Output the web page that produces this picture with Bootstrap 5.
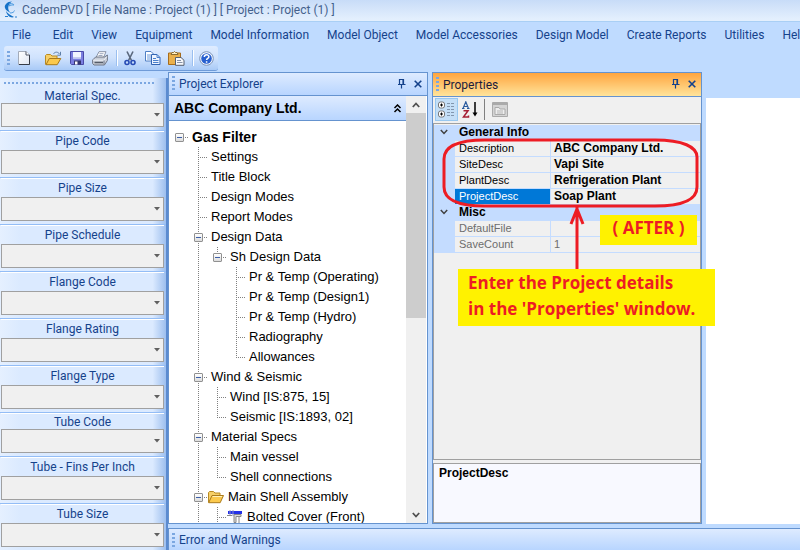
<!DOCTYPE html>
<html lang="en">
<head>
<meta charset="utf-8">
<meta name="viewport" content="width=device-width, initial-scale=1">
<title>CademPVD</title>
<link href="https://cdn.jsdelivr.net/npm/bootstrap@5.3.0/dist/css/bootstrap.min.css" rel="stylesheet">
<style>
:root{--line:#6593cf;--navy:#15428b;--face:#bfdbff;--ui:Roboto,"Open Sans",sans-serif;--arial:"Liberation Sans",Arial,sans-serif}
body{background:var(--face);font-family:var(--ui);font-size:12px;line-height:16px;color:var(--navy)}
button{padding:0;border:0;background:none;color:inherit}
svg{display:block;flex:none}
.titlebar{height:22px;padding-left:3px;gap:4px;background:linear-gradient(#c8dcf8,#e3effd 90%);border-bottom:1px solid #a9cff5;color:#44618c;white-space:pre}
.menubar{height:24px;padding:2px 0 0 3px;white-space:nowrap;overflow:hidden}
.menubar a{padding:0 9px;color:var(--navy);text-decoration:none}
.toolstrip{height:25px;width:214px;margin:0 0 1px 4px;padding:1px 0 0 3px;border-radius:3px;background:linear-gradient(#dfecff,#cfe2fd 50%,#a9caf7);border-bottom:1px solid #6f9bd8}
.toolstrip button{width:24px;height:23px;display:flex;align-items:center;justify-content:center}
.tool-sep{width:1px;height:16px;background:#fff;border-left:1px solid #9abff0;box-sizing:content-box}
.grip{width:3px;height:15px;flex:none;background:repeating-linear-gradient(#7ba7e1 0 2px,transparent 2px 4px)}
.sidebar{width:168px;flex:none;margin-top:6px;border-right:2px solid #5b8bd0;background:linear-gradient(90deg,#e5f0ff,#dbeaff 12%,#dbeaff 92%,#9dbfee)}
.dots{height:2px;margin:4px 10px 4px 4px;background:repeating-linear-gradient(90deg,#7ba7e1 0 2px,transparent 2px 4px)}
.spec{padding:0 2px 3px 1px}
.spec+.spec{border-top:1px solid #93bdf6}
.spec+.spec label{border-top:1px solid #fff}
.spec label{display:block;height:19px;line-height:18px;text-align:center}
.spec.tight label{height:16px;line-height:16px}
.spec:first-of-type label{height:15px;line-height:16px}
.spec select{display:block;width:100%;height:24px;border:1px solid #a0a0a0;background:#f0f0f0;appearance:none;border-radius:0}
.pick{display:grid}
.pick>*{grid-area:1/1}
.pick svg{place-self:center end;margin-right:4px;pointer-events:none}
.explorer{width:260px;flex:none;border:1px solid var(--line);background:#fff}
.caption{height:24px;padding:0 5px 0 3px;gap:4px;border-bottom:1px solid var(--line);background:linear-gradient(#deebff,#b8d5ff)}
.caption h2{font-size:12px;line-height:16px;margin:1px 0 0;font-weight:400;flex:1}
.company{height:25px;padding:0 4px 0 5px;border-bottom:1px solid var(--line);background:linear-gradient(#deebff,#b8d5ff);color:#000;font:bold 14px/20px var(--arial)}
.tree{list-style:none;margin:0;padding:6px 0 0 1px;font:13px/20px var(--arial);color:#000;white-space:nowrap}
.tree li{display:flex;height:20px;align-items:center}
.tree .root{font-weight:bold;font-size:14px}
.tree li>:last-child{padding-left:3px}
.guide{width:19px;height:20px;flex:none;background-repeat:no-repeat;--v:repeating-linear-gradient(#808080 0 1px,transparent 1px 2px);--h:repeating-linear-gradient(90deg,#808080 0 1px,transparent 1px 2px)}
.bar-v{background-image:var(--v);background-size:1px 20px;background-position:9px 0}
.tee{background-image:var(--v),var(--h);background-size:1px 20px,10px 1px;background-position:9px 0,9px 10px}
.elbow{background-image:var(--v),var(--h);background-size:1px 10px,10px 1px;background-position:9px 0,9px 10px}
.stub{background-image:var(--h);background-size:10px 1px;background-position:9px 10px}
.twist{display:block;width:9px;height:9px;margin:6px 0 0 5px;border:1px solid #919191;border-radius:1px;background:linear-gradient(#3d5fa8,#3d5fa8) center/5px 1px no-repeat,linear-gradient(#fff,#dcdcdc)}
.guide{display:flex;align-items:flex-start}
.scroller{width:20px;flex:none;background:#f0f0f0;margin-right:1px}
.scroller button{height:17px;width:20px;display:flex;align-items:center;justify-content:center}
.thumb{height:205px;background:#cdcdcd}
.props{width:270px;flex:none;border:1px solid var(--line);background:#f0f0f0}
.props .caption{background:linear-gradient(#ffa53f,#ffe49b);color:#1c1c3c}
.props .caption svg{color:var(--navy)}
.prop-tools{height:26px;padding:0 2px}
.prop-tools button{width:23px;height:23px;display:flex;align-items:center;justify-content:center}
.prop-tools .chosen{background:#c4dff7;border:1px solid #98c8f0}
.prop-tools .rule{width:1px;height:21px;background:#808080;margin:0 3px}
.grid-box{border:1px solid #a0a0a0;padding-top:1px}
.prop-grid{width:100%;border-collapse:separate;border-spacing:0;table-layout:fixed;font:11px/15px var(--arial);color:#000}
.prop-grid td,.prop-grid th{height:16px;padding:0 0 0 4px;border-bottom:1px solid #c4dcff;font-weight:400;white-space:nowrap}
.prop-grid .gutter,.prop-grid .cat{background:#c4dcff}
.prop-grid .gutter{padding-left:6px}
.prop-grid td:last-child{border-left:1px solid #c4dcff;padding-left:3px}
.prop-grid td b,.prop-grid .cat{font-weight:bold;font-size:12px}
.prop-grid .picked{background:#0078d7;color:#fff}
.prop-grid .off{color:#6d6d6d}
.hint{height:60px;margin-top:3px;border:1px solid #a0a0a0;background:#f8f9ff;padding:2px 5px;font:bold 12px/15px var(--arial);color:#000}
.callout,.after{background:#fff200;color:#ed1c24;font:bold 17px/26px "Open Sans",var(--ui);white-space:nowrap;z-index:2}
.ring{left:6px;top:62px;z-index:2;pointer-events:none}
.after{left:167px;top:142px;width:97px;height:30px;padding:0;line-height:26px;text-align:center}
.callout{left:25px;top:196px;width:257px;height:57px;padding:1px 0 0 10px}
.canvas-area{margin:26px 0 0 4px;background:#fff}
.errors{height:22px;margin-top:4px;padding:1px 3px 0;gap:4px;border-top:1px solid var(--line);border-left:1px solid var(--line);background:linear-gradient(#deebff,#b8d5ff)}
</style>
<script src="https://cdn.jsdelivr.net/npm/bootstrap@5.3.0/dist/js/bootstrap.bundle.min.js"></script>
</head>
<body class="vh-100 d-flex flex-column overflow-hidden">
<svg width="0" height="0" class="position-absolute" aria-hidden="true">
  <defs>
    <symbol id="arrow" viewBox="0 0 6 4"><path d="M0 0h6L3 3.5z" fill="#606060"/></symbol>
    <symbol id="pin" viewBox="0 0 8 10"><path d="M1.5 5.500V.5h4v5M5 .5v5M0 5.500h7.500M3.500 6v3.500" fill="none" stroke="currentColor" stroke-width="1.200"/></symbol>
    <symbol id="close" viewBox="0 0 8 8"><path d="M.7.7l6.600 6.600M7.300.7L.7 7.300" fill="none" stroke="currentColor" stroke-width="1.600"/></symbol>
    <symbol id="folder" viewBox="0 0 16 14"><path d="M.5 12.500V2.500l1-1h4l1.500 1.500h5v3" fill="#f6cf67" stroke="#b98a22"/><path d="M.7 12.700L4 5.500h11.500l-3.300 7.200z" fill="#fbc94d" stroke="#a97a1c"/><path d="M4.600 6.500h9.500" stroke="#fff0b8"/></symbol>
  </defs>
</svg>

<header class="titlebar d-flex align-items-center">
  <svg width="15" height="18" viewBox="0 0 15 18"><path d="M9 .5C4 .5 1 4 2 7c.6 2 3 3.500 5.500 5-1.500-2-3-4-2-7C6 3 7 2 9 .5z" fill="#1672c8"/><path d="M3 10c2 3 5 4 8 6-3 1.500-7-1-8-6z" fill="#1672c8"/><path d="M7 2.500c2 0 3.500.5 4 1.500-1.500-.2-3 0-4.500 1zM7 12c3 0 4-1 4.500-2.500" fill="none" stroke="#4c9be0"/><path d="M2 15.500h3M12 16h2" stroke="#2a7fd0"/></svg>
  <span>CademPVD [ File Name : Project (1) ] [ Project : Project (1) ]</span>
</header>

<nav class="menubar d-flex align-items-center" aria-label="Main menu">
  <a href="#">File</a><a href="#" class="ms-1">Edit</a><a href="#">View</a><a href="#">Equipment</a><a href="#">Model Information</a><a href="#">Model Object</a><a href="#">Model Accessories</a><a href="#">Design Model</a><a href="#">Create Reports</a><a href="#">Utilities</a><a href="#">Help</a>
</nav>

<div class="toolstrip d-flex align-items-center" role="toolbar" aria-label="Standard">
  <span class="grip"></span>
  <button type="button" aria-label="New" class="ms-1"><svg class="me-1" width="12" height="14" viewBox="0 0 12 14"><defs><linearGradient id="pg" x2="1" y2="1"><stop stop-color="#fff"/><stop offset="1" stop-color="#dfe6f2"/></linearGradient></defs><path d="M.5.5H8L11.500 4v9.500H.5z" fill="url(#pg)" stroke="#a3abb9"/><path d="M11.500 4v9.500H1" fill="none" stroke="#363c48"/><path d="M8 .5V4h3.500" fill="#fff" stroke="#4c5566"/></svg></button>
  <button type="button" aria-label="Open" class="ms-1"><svg width="17" height="15" viewBox="0 0 17 15"><path d="M.5 13.500V4.500l1-1h4L7 5h5v3" fill="#f6cf67" stroke="#b98a22"/><path d="M1 13.700l3.300-6.200h11.500l-3.600 6.200z" fill="#fbc94d" stroke="#a97a1c"/><path d="M8.500 2.800C10 .6 13 .6 14.500 3M15.500.8v3.400H12.200" fill="none" stroke="#5e7fa8"/></svg></button>
  <button type="button" aria-label="Save"><svg width="14" height="14" viewBox="0 0 14 14"><path d="M.5.5h13v13h-12l-1-1z" fill="#7b7fe0" stroke="#4a4aa8"/><path d="M3 1h8v6.500H3z" fill="#f2f5ff"/><path d="M3 6h8v1.500H3z" fill="#c7cdf0"/><path d="M4 9.500h7v4H4z" fill="#34366f"/><path d="M5 10.500h2.500v3H5z" fill="#fff"/></svg></button>
  <button type="button" aria-label="Print"><svg width="16" height="15" viewBox="0 0 16 15"><path d="M4 6.500L7 .7h7L11.500 6.500z" fill="#fff" stroke="#8892a5"/><path d="M7.500 2.700h4M6.500 4.500h4" stroke="#9aa6bd"/><path d="M.6 9l3-3h9l2.800-2v5.500l-3 4.500H2L.6 12.500z" fill="#c9ced8" stroke="#6f7786"/><path d="M1 9.200h10.800l3-3.500" fill="none" stroke="#eef1f6"/><path d="M2.500 11.500h8.500" stroke="#555c69" stroke-width="1.500"/><path d="M12 9.500v4" stroke="#71798a"/></svg></button>
  <span class="tool-sep ms-1"></span>
  <button type="button" aria-label="Cut"><svg width="12" height="15" viewBox="0 0 12 15"><path d="M3 .5l4.500 9M9 .5L4.500 9.500" stroke="#59667b" stroke-width="1.600"/><circle cx="3" cy="11.500" r="2" fill="none" stroke="#274bb4" stroke-width="1.600"/><circle cx="9" cy="11.500" r="2" fill="none" stroke="#274bb4" stroke-width="1.600"/></svg></button>
  <button type="button" aria-label="Copy"><svg width="16" height="14" viewBox="0 0 16 14"><path d="M.5.5H6l2.500 2.500v7h-8z" fill="#fff" stroke="#4f7fc4"/><path d="M2 4h4M2 6h4M2 8h4" stroke="#6d9bdb"/><path d="M6.500 3.500h5.500l3 3v7H6.500z" fill="#edf4ff" stroke="#3265b3"/><path d="M12 3.500v3h3M8 7.500h3M8 9.500h5.500M8 11.500h5.500" fill="none" stroke="#4a80cc"/></svg></button>
  <button type="button" aria-label="Paste"><svg width="17" height="15" viewBox="0 0 17 15"><path d="M.5 2h12v11.500H.5z" fill="#eab04c" stroke="#a76c1b"/><path d="M3 3.500l1-2h1.500L6.500.5l1 1H9l1 2z" fill="#fff0c6" stroke="#8a6b32"/><path d="M7.500 6.500h5.500l3 2.800v5H7.500z" fill="#f7f8fb" stroke="#576071"/><path d="M9 9.500h4M9 11.500h5.500" stroke="#8893a8"/></svg></button>
  <span class="tool-sep ms-1"></span>
  <button type="button" aria-label="Help"><svg width="15" height="15" viewBox="0 0 15 15"><circle cx="7.500" cy="7.500" r="6.800" fill="#f5f9ff" stroke="#7b93b8"/><circle cx="7.500" cy="7.500" r="5.300" fill="#2860cf"/><path d="M5.300 6c0-3 4.600-2.900 4.600-.3C9.900 7.400 7.600 7.200 7.600 9M7.600 10.200v1.500" fill="none" stroke="#fff" stroke-width="1.500"/></svg></button>
</div>

<div class="d-flex flex-grow-1 overflow-hidden">
  <aside class="sidebar">
    <div class="dots"></div>
    <form>
      <div class="spec"><label for="s1">Material Spec.</label><div class="pick"><select id="s1"></select><svg width="6" height="4"><use href="#arrow"/></svg></div></div>
      <div class="spec"><label for="s2">Pipe Code</label><div class="pick"><select id="s2"></select><svg width="6" height="4"><use href="#arrow"/></svg></div></div>
      <div class="spec"><label for="s3">Pipe Size</label><div class="pick"><select id="s3"></select><svg width="6" height="4"><use href="#arrow"/></svg></div></div>
      <div class="spec"><label for="s4">Pipe Schedule</label><div class="pick"><select id="s4"></select><svg width="6" height="4"><use href="#arrow"/></svg></div></div>
      <div class="spec"><label for="s5">Flange Code</label><div class="pick"><select id="s5"></select><svg width="6" height="4"><use href="#arrow"/></svg></div></div>
      <div class="spec"><label for="s6">Flange Rating</label><div class="pick"><select id="s6"></select><svg width="6" height="4"><use href="#arrow"/></svg></div></div>
      <div class="spec"><label for="s7">Flange Type</label><div class="pick"><select id="s7"></select><svg width="6" height="4"><use href="#arrow"/></svg></div></div>
      <div class="spec tight"><label for="s8">Tube Code</label><div class="pick"><select id="s8"></select><svg width="6" height="4"><use href="#arrow"/></svg></div></div>
      <div class="spec"><label for="s9">Tube - Fins Per Inch</label><div class="pick"><select id="s9"></select><svg width="6" height="4"><use href="#arrow"/></svg></div></div>
      <div class="spec"><label for="s10">Tube Size</label><div class="pick"><select id="s10"></select><svg width="6" height="4"><use href="#arrow"/></svg></div></div>
      <div class="spec"></div>
    </form>
  </aside>

  <div class="d-flex flex-column flex-grow-1 overflow-hidden">
    <main class="d-flex flex-grow-1 overflow-hidden">
      <section class="explorer d-flex flex-column">
        <div class="caption d-flex align-items-center">
          <span class="grip"></span><h2>Project Explorer</h2>
          <button type="button" aria-label="Pin explorer"><svg width="8" height="10"><use href="#pin"/></svg></button>
          <button type="button" class="ms-1" aria-label="Close explorer"><svg width="8" height="8"><use href="#close"/></svg></button>
        </div>
        <div class="d-flex flex-grow-1 overflow-hidden">
          <div class="flex-grow-1 overflow-hidden">
            <div class="company d-flex align-items-center justify-content-between"><span>ABC Company Ltd.</span>
              <button type="button" aria-label="Collapse"><svg width="9" height="9" viewBox="0 0 9 9"><path d="M1.500 4l3-3 3 3M1.500 8l3-3 3 3" fill="none" stroke="#000" stroke-width="1.500"/></svg></button></div>
            <ul class="tree">
              <li class="root"><span class="guide stub"><button type="button" class="twist" aria-label="Toggle Gas Filter"></button></span><span>Gas Filter</span></li>
              <li><span class="guide"></span><span class="guide tee"></span><span>Settings</span></li>
              <li><span class="guide"></span><span class="guide tee"></span><span>Title Block</span></li>
              <li><span class="guide"></span><span class="guide tee"></span><span>Design Modes</span></li>
              <li><span class="guide"></span><span class="guide tee"></span><span>Report Modes</span></li>
              <li><span class="guide"></span><span class="guide tee"><button type="button" class="twist" aria-label="Toggle Design Data"></button></span><span>Design Data</span></li>
              <li><span class="guide"></span><span class="guide bar-v"></span><span class="guide elbow"><button type="button" class="twist" aria-label="Toggle Sh Design Data"></button></span><span>Sh Design Data</span></li>
              <li><span class="guide"></span><span class="guide bar-v"></span><span class="guide"></span><span class="guide tee"></span><span>Pr &amp; Temp (Operating)</span></li>
              <li><span class="guide"></span><span class="guide bar-v"></span><span class="guide"></span><span class="guide tee"></span><span>Pr &amp; Temp (Design1)</span></li>
              <li><span class="guide"></span><span class="guide bar-v"></span><span class="guide"></span><span class="guide tee"></span><span>Pr &amp; Temp (Hydro)</span></li>
              <li><span class="guide"></span><span class="guide bar-v"></span><span class="guide"></span><span class="guide tee"></span><span>Radiography</span></li>
              <li><span class="guide"></span><span class="guide bar-v"></span><span class="guide"></span><span class="guide elbow"></span><span>Allowances</span></li>
              <li><span class="guide"></span><span class="guide tee"><button type="button" class="twist" aria-label="Toggle Wind and Seismic"></button></span><span>Wind &amp; Seismic</span></li>
              <li><span class="guide"></span><span class="guide bar-v"></span><span class="guide tee"></span><span>Wind [IS:875, 15]</span></li>
              <li><span class="guide"></span><span class="guide bar-v"></span><span class="guide elbow"></span><span>Seismic [IS:1893, 02]</span></li>
              <li><span class="guide"></span><span class="guide tee"><button type="button" class="twist" aria-label="Toggle Material Specs"></button></span><span>Material Specs</span></li>
              <li><span class="guide"></span><span class="guide bar-v"></span><span class="guide tee"></span><span>Main vessel</span></li>
              <li><span class="guide"></span><span class="guide bar-v"></span><span class="guide elbow"></span><span>Shell connections</span></li>
              <li><span class="guide"></span><span class="guide tee"><button type="button" class="twist" aria-label="Toggle Main Shell Assembly"></button></span><svg width="16" height="14"><use href="#folder"/></svg><span class="ps-1">Main Shell Assembly</span></li>
              <li><span class="guide"></span><span class="guide bar-v"></span><span class="guide tee"></span><svg width="16" height="14" viewBox="0 0 16 14"><path d="M1 1h14v3H1z" fill="#2431e8"/><path d="M3 0v6M6 0v6" stroke="#8890c8"/><path d="M0 5.500h5M7 4.500h7v2H9v6H7zM12 6.500v7" fill="#ddd" stroke="#888"/></svg><span class="ps-1">Bolted Cover (Front)</span></li>
            </ul>
          </div>
          <div class="scroller d-flex flex-column">
            <button type="button" aria-label="Scroll up"><svg width="8" height="6" viewBox="0 0 8 6"><path d="M.8 5L4 1.500 7.200 5" fill="none" stroke="#505050" stroke-width="1.800"/></svg></button>
            <div class="thumb"></div>
            <button type="button" class="mt-auto" aria-label="Scroll down"><svg width="8" height="6" viewBox="0 0 8 6"><path d="M.8 1L4 4.500 7.200 1" fill="none" stroke="#505050" stroke-width="1.800"/></svg></button>
          </div>
        </div>
      </section>

      <section class="props d-flex flex-column position-relative ms-1">
        <div class="caption d-flex align-items-center">
          <span class="grip"></span><h2>Properties</h2>
          <button type="button" aria-label="Pin properties"><svg width="8" height="10"><use href="#pin"/></svg></button>
          <button type="button" class="ms-1" aria-label="Close properties"><svg width="8" height="8"><use href="#close"/></svg></button>
        </div>
        <div class="prop-tools d-flex align-items-center">
          <button type="button" class="chosen" aria-label="Categorized"><svg width="17" height="17" viewBox="0 0 17 17"><rect x=".5" y="1" width="6" height="6" rx="2" fill="#fff" stroke="#777"/><rect x=".5" y="10" width="6" height="6" rx="2" fill="#fff" stroke="#777"/><path d="M2 4h3M3.500 2.500v3M2 13h3M3.500 11.500v3" stroke="#000"/><path d="M9 2.500h3M13 2.500h3M9 5.500h3M13 5.500h3M9 8.500h3M13 8.500h3M9 11.500h3M13 11.500h3M9 14.500h3M13 14.500h3" stroke="#8296ad"/></svg></button>
          <button type="button" aria-label="Alphabetical"><svg width="16" height="17" viewBox="0 0 16 17"><path d="M1 7.500L3.800.8 6.500 7.500M2 5.500h3.700M0 7.500h2.500M5 7.500h2.500" fill="none" stroke="#2c5c9e" stroke-width="1.200"/><path d="M1.500 9.800H6L1.500 16H6.500V14.500" fill="none" stroke="#a62035" stroke-width="1.500"/><path d="M13 1v12" stroke="#000" stroke-width="1.500"/><path d="M10.500 11.500h5L13 15.500z"/></svg></button>
          <span class="rule"></span>
          <button type="button" disabled aria-label="Property pages"><svg width="16" height="15" viewBox="0 0 16 15"><path d="M.5.5h15v14H.5z" fill="#d4d4d4" stroke="#aaa"/><path d="M1 2h14" stroke="#aaa" stroke-width="2"/><path d="M3 5.500h4l1 1.500h5v5.500H3z" fill="#eee" stroke="#aaa"/><path d="M5 9h6M5 11h6" stroke="#b5b5b5"/></svg></button>
        </div>
        <div class="grid-box flex-grow-1">
          <table class="prop-grid">
            <colgroup><col style="width:21px"><col style="width:95px"><col></colgroup>
            <tbody>
              <tr><td class="gutter"><svg width="8" height="6" viewBox="0 0 8 6"><path d="M.8 1L4 4.500 7.200 1" fill="none" stroke="#404040" stroke-width="1.500"/></svg></td><th class="cat" colspan="2">General Info</th></tr>
              <tr><td class="gutter"></td><td>Description</td><td><b>ABC Company Ltd.</b></td></tr>
              <tr><td class="gutter"></td><td>SiteDesc</td><td><b>Vapi Site</b></td></tr>
              <tr><td class="gutter"></td><td>PlantDesc</td><td><b>Refrigeration Plant</b></td></tr>
              <tr><td class="gutter"></td><td class="picked">ProjectDesc</td><td><b>Soap Plant</b></td></tr>
              <tr><td class="gutter"><svg width="8" height="6" viewBox="0 0 8 6"><path d="M.8 1L4 4.500 7.200 1" fill="none" stroke="#404040" stroke-width="1.500"/></svg></td><th class="cat" colspan="2">Misc</th></tr>
              <tr class="off"><td class="gutter"></td><td>DefaultFile</td><td></td></tr>
              <tr class="off"><td class="gutter"></td><td>SaveCount</td><td>1</td></tr>
            </tbody>
          </table>
        </div>
        <div class="hint">ProjectDesc</div>
        <svg class="ring position-absolute" width="262" height="136" viewBox="0 0 262 136" fill="none" stroke="#ed1c24" stroke-width="3"><path d="M46 5H216C244 5 258 12 258 22V52C258 66 242 71 216 71H46C18 71 5 65 5 52V24C5 11 18 5 46 5zM138 134V72M132 89L138 74L144 89"/></svg>
        <div class="after position-absolute">( AFTER )</div>
        <div class="callout position-absolute">Enter the Project details<br>in the 'Properties' window.</div>
      </section>

      <div class="canvas-area flex-grow-1"></div>
    </main>
    <footer class="errors d-flex align-items-center"><span class="grip"></span><span>Error and Warnings</span></footer>
  </div>
</div>
</body>
</html>
